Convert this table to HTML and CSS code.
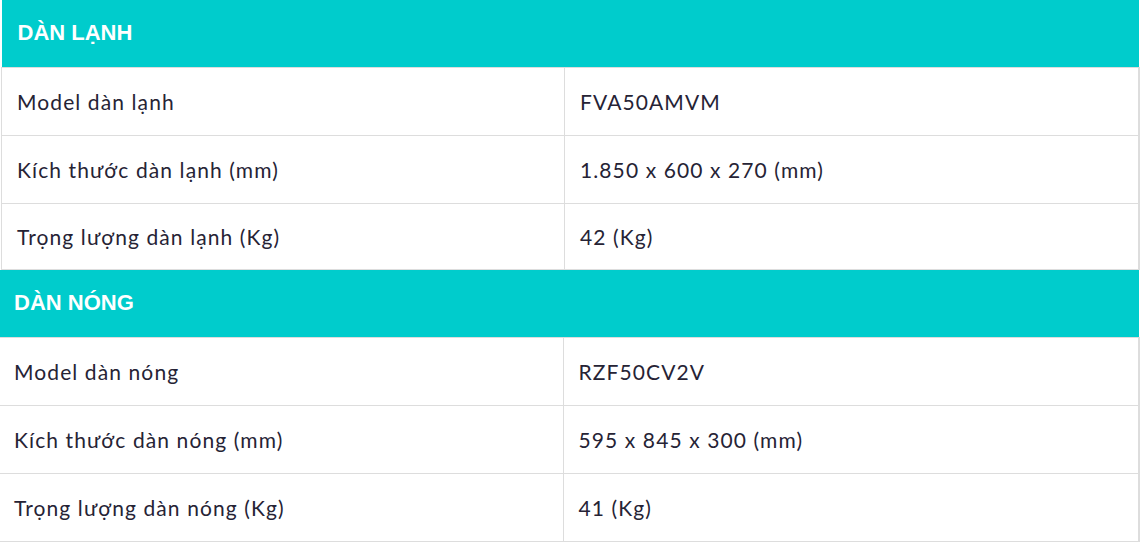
FILE: index.html
```
<!DOCTYPE html>
<html lang="vi">
<head>
    <meta charset="UTF-8">
    <meta name="viewport" content="width=device-width, initial-scale=1.0">
    <title>Thông số kỹ thuật</title>
    <link rel="stylesheet" href="styles.css">
</head>
<body>

    <table class="specs specs-lanh">
        <colgroup>
            <col class="col-label">
            <col>
        </colgroup>
        <thead>
            <tr>
                <th colspan="2">DÀN LẠNH</th>
            </tr>
        </thead>
        <tbody>
            <tr>
                <td class="label">Model dàn lạnh</td>
                <td>FVA50AMVM</td>
            </tr>
            <tr>
                <td class="label">Kích thước dàn lạnh (mm)</td>
                <td>1.850 x 600 x 270 (mm)</td>
            </tr>
            <tr>
                <td class="label">Trọng lượng dàn lạnh (Kg)</td>
                <td>42 (Kg)</td>
            </tr>
        </tbody>
    </table>

    <table class="specs specs-nong">
        <colgroup>
            <col class="col-label">
            <col>
        </colgroup>
        <thead>
            <tr>
                <th colspan="2">DÀN NÓNG</th>
            </tr>
        </thead>
        <tbody>
            <tr>
                <td class="label">Model dàn nóng</td>
                <td>RZF50CV2V</td>
            </tr>
            <tr>
                <td class="label">Kích thước dàn nóng (mm)</td>
                <td>595 x 845 x 300 (mm)</td>
            </tr>
            <tr>
                <td class="label">Trọng lượng dàn nóng (Kg)</td>
                <td>41 (Kg)</td>
            </tr>
        </tbody>
    </table>

</body>
</html>
```

FILE: styles.css
```
body {
    margin: 0;
    background: #fff;
    font-family: Lato, "Noto Sans", sans-serif;
}
.specs {
    border-collapse: collapse;
    table-layout: fixed;
}
.specs-lanh {
    width: 1139px;
    margin-left: 1px;
}
.specs-nong {
    width: 1140px;
}
.specs .col-label {
    width: 563px;
}
.specs th {
    background-color: #00cccc;
    color: #fff;
    font-family: "Liberation Sans", Arial, sans-serif;
    font-weight: bold;
    font-size: 22px;
    text-align: left;
    height: 67px;
    padding: 0 16px;
    box-sizing: border-box;
}
.specs td {
    height: 68px;
    box-sizing: border-box;
    border: 1px solid #dddddd;
    padding: 0 15px;
    font-size: 21px;
    letter-spacing: 1.1px;
    color: #262335;
}
.specs-lanh tr:last-child td {
    height: 66px;
}
.specs-lanh td:last-child {
    border-right: 2px solid #dddddd;
}
.specs-nong th {
    padding-left: 14px;
    height: 68px;
}
.specs-nong td {
    padding-left: 14px;
}
.specs-nong td.label {
    border-left: none;
}
.specs-nong td:last-child {
    padding-left: 15px;
    border-right: 2px solid #dddddd;
}
```
